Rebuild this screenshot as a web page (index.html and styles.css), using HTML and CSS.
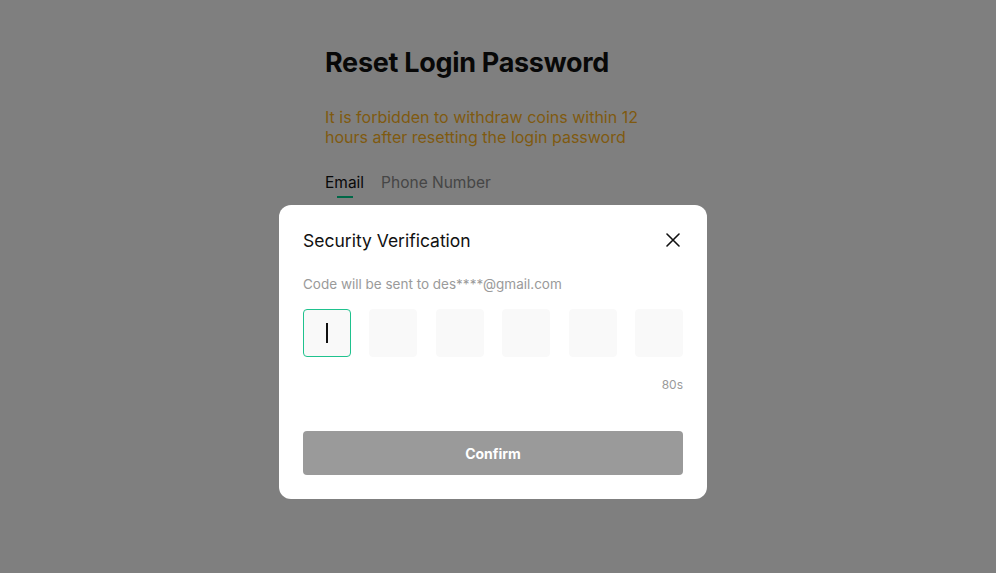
FILE: index.html
```html
<!DOCTYPE html>
<html>
<head>
<meta charset="utf-8">
<link rel="stylesheet" href="styles.css">
</head>
<body>
<main class="page">
  <h1 class="title">Reset Login Password</h1>
  <p class="warning">It is forbidden to withdraw coins within 12 hours after resetting the login password</p>
  <nav class="tabs">
    <span class="tab active">Email</span>
    <span class="tab">Phone Number</span>
  </nav>
</main>
<div class="overlay">
  <div class="modal">
    <div class="modal-head">
      <h2 class="modal-title">Security Verification</h2>
      <svg class="close" width="14" height="14" viewBox="0 0 14 14"><path d="M1 1L13 13M13 1L1 13" stroke="#111" stroke-width="1.6" stroke-linecap="round"/></svg>
    </div>
    <p class="hint">Code will be sent to des****@gmail.com</p>
    <div class="codes">
      <div class="code focus"><span class="caret"></span></div>
      <div class="code"></div>
      <div class="code"></div>
      <div class="code"></div>
      <div class="code"></div>
      <div class="code"></div>
    </div>
    <div class="timer">80s</div>
    <button class="confirm">Confirm</button>
  </div>
</div>
</body>
</html>
```
FILE: styles.css
```css
* { box-sizing: border-box; }
html, body { margin: 0; padding: 0; }
body {
  width: 996px;
  height: 573px;
  background: #fff;
  font-family: Inter, Roboto, "Liberation Sans", sans-serif;
  overflow: hidden;
}
.page {
  width: 346px;
  margin-left: 325px;
  padding-top: 44px;
}
.title {
  margin: 0;
  font-size: 27px;
  line-height: 38px;
  font-weight: 700;
  color: #111;
  letter-spacing: -0.3px;
}
.warning {
  margin: 25px 0 0;
  font-size: 16px;
  line-height: 20px;
  color: #ffb41e;
  width: 340px;
}
.tabs {
  display: flex;
  gap: 17px;
  margin-top: 25px;
}
.tab {
  font-size: 15.5px;
  line-height: 22px;
  color: #8c8c8c;
  position: relative;
}
.tab.active { color: #111; }
.tab.active::after {
  content: "";
  position: absolute;
  left: 12px;
  width: 16px;
  bottom: -4px;
  height: 2px;
  background: #00d18f;
}
.overlay {
  position: fixed;
  inset: 0;
  background: rgba(0, 0, 0, 0.5);
}
.modal {
  position: absolute;
  left: 279px;
  top: 205px;
  width: 428px;
  height: 294px;
  background: #fff;
  border-radius: 12px;
  padding: 24px;
  display: flex;
  flex-direction: column;
}
.modal-head {
  display: flex;
  align-items: center;
  justify-content: space-between;
  height: 22px;
}
.modal-title {
  margin: 0;
  font-size: 17.5px;
  font-weight: 400;
  color: #111;
}
.close { margin-right: 3px; }
.hint {
  margin: 23px 0 0;
  font-size: 13.5px;
  line-height: 20px;
  color: #9a9a9a;
}
.codes {
  display: flex;
  justify-content: space-between;
  margin-top: 15px;
}
.code {
  width: 48px;
  height: 48px;
  border-radius: 4px;
  background: #f9f9f9;
  border: 1px solid #f9f9f9;
  display: flex;
  align-items: center;
  justify-content: center;
}
.code.focus { border-color: #1fc28e; }
.caret {
  width: 1.5px;
  height: 20px;
  background: #111;
}
.timer {
  margin-top: 20px;
  text-align: right;
  font-size: 12px;
  line-height: 16px;
  color: #9a9a9a;
}
.confirm {
  margin-top: 38px;
  height: 44px;
  width: 100%;
  flex-shrink: 0;
  border: none;
  border-radius: 4px;
  background: #9a9a9a;
  color: #fff;
  font-family: inherit;
  font-size: 14px;
  font-weight: 700;
}
```
